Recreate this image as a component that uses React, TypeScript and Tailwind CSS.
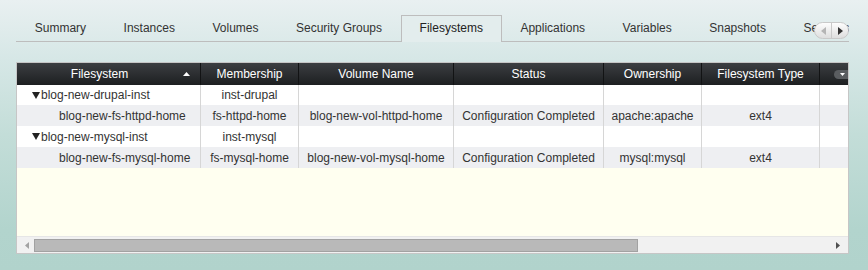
import React from 'react';

const tabs = ['Summary', 'Instances', 'Volumes', 'Security Groups', 'Filesystems', 'Applications', 'Variables', 'Snapshots', 'Services'];

const columns = [
  { label: 'Filesystem', w: 'w-[184px]' },
  { label: 'Membership', w: 'w-[98px]' },
  { label: 'Volume Name', w: 'w-[155px]' },
  { label: 'Status', w: 'w-[150px]' },
  { label: 'Ownership', w: 'w-[98px]' },
  { label: 'Filesystem Type', w: 'w-[118px]' },
];

type Row = { name: string; group?: boolean; cells: string[] };

const rows: Row[] = [
  { name: 'blog-new-drupal-inst', group: true, cells: ['inst-drupal', '', '', '', ''] },
  { name: 'blog-new-fs-httpd-home', cells: ['fs-httpd-home', 'blog-new-vol-httpd-home', 'Configuration Completed', 'apache:apache', 'ext4'] },
  { name: 'blog-new-mysql-inst', group: true, cells: ['inst-mysql', '', '', '', ''] },
  { name: 'blog-new-fs-mysql-home', cells: ['fs-mysql-home', 'blog-new-vol-mysql-home', 'Configuration Completed', 'mysql:mysql', 'ext4'] },
];

function Caret() {
  return (
    <svg width="8" height="7" viewBox="0 0 8 7" className="shrink-0">
      <path d="M0 0 H8 L4 7 Z" fill="#222" />
    </svg>
  );
}

export default function App() {
  return (
    <div className="w-[868px] h-[270px] overflow-hidden bg-[linear-gradient(to_bottom,#e9f0f1_0%,#d6e7e6_22%,#c3ddd8_50%,#b2d4cd_85%,#b1d3cc_100%)] px-[16px] pt-[15px] font-['Liberation_Sans',Arial,sans-serif] text-[12px] text-[#333]">
      {/* Tab strip */}
      <div className="relative w-[833px] h-[27px] border-b border-[#bdbdbd]">
        <div className="flex h-[27px] overflow-hidden">
          {tabs.map((t) => {
            const active = t === 'Filesystems';
            return (
              <div
                key={t}
                className={`shrink-0 h-[27px] px-[17.75px] flex items-center whitespace-nowrap border-x border-t ${
                  active
                    ? 'border-[#bdbdbd] bg-[#e3eded] text-[#222]'
                    : 'border-transparent text-[#333]'
                }`}
              >
                <span className="pb-[3px]">{t}</span>
              </div>
            );
          })}
        </div>
        {/* tab scroll buttons */}
        <div className="absolute right-0 top-[7px] w-[35px] h-[17px] flex rounded-full border border-[#c9c9c9] bg-gradient-to-b from-[#fdfdfd] to-[#dedede] overflow-hidden">
          <div className="flex-1 flex items-center justify-center border-r border-[#c9c9c9]">
            <svg width="5" height="8" viewBox="0 0 5 8"><path d="M5 0 V8 L0 4 Z" fill="#b5b5b5" /></svg>
          </div>
          <div className="flex-1 flex items-center justify-center">
            <svg width="5" height="8" viewBox="0 0 5 8"><path d="M0 0 V8 L5 4 Z" fill="#333" /></svg>
          </div>
        </div>
      </div>

      {/* Grid */}
      <div className="mt-[20px] w-[833px] h-[192px] border border-[#c6c6c6] bg-[#fffff0] flex flex-col overflow-hidden">
        <div className="flex h-[22px] shrink-0 bg-gradient-to-b from-[#3c3f42] to-[#1d1f21] text-white">
          {columns.map((c, i) => (
            <div
              key={c.label}
              className={`${c.w} shrink-0 relative flex items-center justify-center border-r border-[#121314] ${i === 0 ? 'pr-[18px]' : ''}`}
            >
              {c.label}
              {i === 0 && (
                <svg width="7" height="4" viewBox="0 0 7 4" className="absolute right-[10px] top-[9px]">
                  <path d="M0 4 L3.5 0 L7 4 Z" fill="#fff" />
                </svg>
              )}
            </div>
          ))}
          <div className="flex-1 flex items-center justify-end">
            <div className="w-[16px] h-[9px] mr-[-2px] rounded-l-full bg-[#5a5d60] flex items-center justify-center">
              <svg width="5" height="3" viewBox="0 0 5 3"><path d="M0 0 H5 L2.5 3 Z" fill="#fff" /></svg>
            </div>
          </div>
        </div>

        {rows.map((r, ri) => (
          <div key={r.name} className={`flex shrink-0 ${ri === 0 ? 'h-[20px]' : 'h-[21px]'} ${ri % 2 ? 'bg-[#eeeff2]' : 'bg-white'}`}>
            <div className={`${columns[0].w} shrink-0 flex items-center border-r border-[#d6d6d6] ${r.group ? 'pl-[15px] gap-[1px]' : 'pl-[42px]'}`}>
              {r.group && <Caret />}
              <span className="whitespace-nowrap">{r.name}</span>
            </div>
            {r.cells.map((v, ci) => (
              <div key={ci} className={`${columns[ci + 1].w} shrink-0 flex items-center justify-center whitespace-nowrap border-r border-[#d6d6d6]`}>
                {v}
              </div>
            ))}
            <div className="flex-1" />
          </div>
        ))}

        <div className="flex-1" />

        {/* horizontal scrollbar */}
        <div className="h-[17px] shrink-0 bg-[#f1f1f1] border-t border-[#e6e6e6] flex items-center">
          <div className="w-[17px] flex justify-center pl-[3px]">
            <svg width="4" height="7" viewBox="0 0 4 7"><path d="M4 0 V7 L0 3.5 Z" fill="#a3a3a3" /></svg>
          </div>
          <div className="w-[604px] h-[13px] bg-[#b9b9b9] border border-[#a2a2a2]" />
          <div className="flex-1" />
          <div className="w-[17px] flex justify-center pr-[4px]">
            <svg width="4" height="7" viewBox="0 0 4 7"><path d="M0 0 V7 L4 3.5 Z" fill="#505050" /></svg>
          </div>
        </div>
      </div>
    </div>
  );
}
